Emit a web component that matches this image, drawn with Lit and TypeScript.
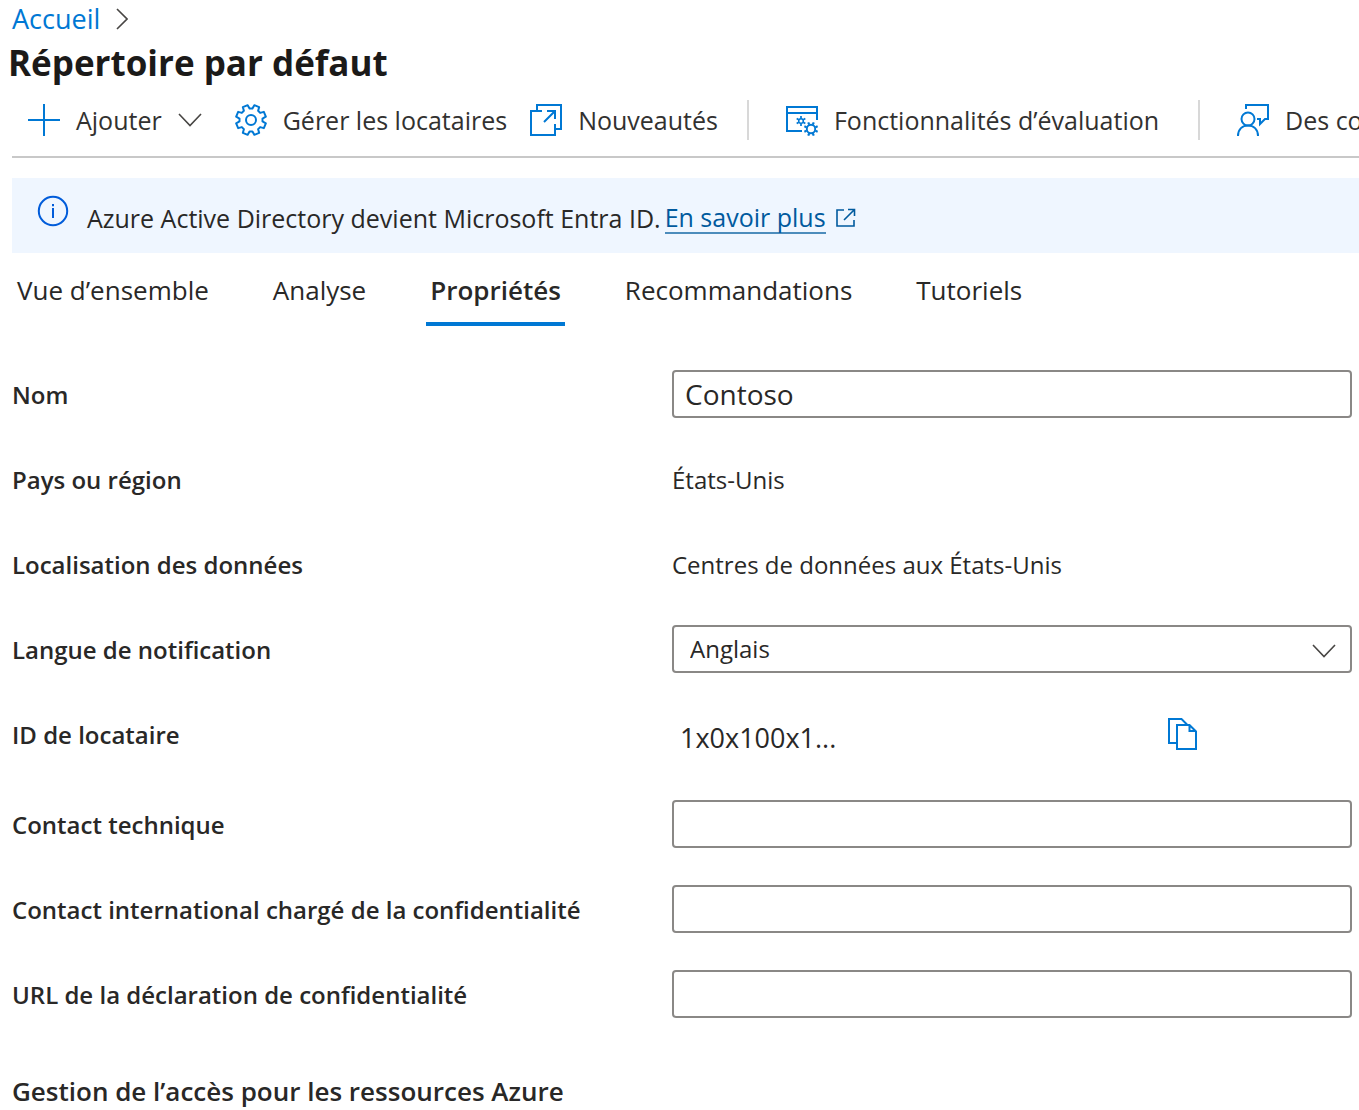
import { LitElement, html, css, svg } from "lit";
import { customElement, state } from "lit/decorators.js";

const gearPath = (cx: number, cy: number, outer: number, inner: number, teeth: number): string => {
  const points: string[] = [];
  const step = (Math.PI * 2) / teeth;
  for (let i = 0; i < teeth; i++) {
    const a = i * step + step / 2 - Math.PI / 2;
    const corners: [number, number][] = [
      [a - step * 0.34, inner],
      [a - step * 0.22, outer],
      [a + step * 0.22, outer],
      [a + step * 0.34, inner],
    ];
    for (const [t, r] of corners) {
      points.push(`${(cx + r * Math.cos(t)).toFixed(2)} ${(cy + r * Math.sin(t)).toFixed(2)}`);
    }
  }
  return `M${points.join("L")}Z`;
};

const spokes = (cx: number, cy: number, from: number, to: number, count: number): string =>
  Array.from({ length: count }, (_, i) => {
    const a = ((i + 0.5) * Math.PI * 2) / count;
    const at = (r: number) => `${(cx + r * Math.cos(a)).toFixed(2)} ${(cy + r * Math.sin(a)).toFixed(2)}`;
    return `M${at(from)}L${at(to)}`;
  }).join("");

const icons = {
  plus: svg`<path d="M16 0V32M0 16H32" />`,
  gear: svg`<path d=${gearPath(16, 16, 15.2, 11.6, 8)} stroke-linejoin="round" /><circle cx="16" cy="16" r="5" />`,
  news: svg`<path d="M7 6V1H31V25H26M12 7H1V31H25V20M14 18L25 7M17 7H25V15" />`,
  preview: svg`<path d="M16 27H1V3H31V16M1 9H31" />
    <circle cx="15" cy="17" r="2.3" stroke-width="1.5" /><path d=${spokes(15, 17, 2.6, 5, 6)} stroke-width="1.7" />
    <circle cx="25" cy="25" r="4.2" stroke-width="1.9" /><path d=${spokes(25, 25, 4.8, 7.2, 8)} stroke-width="2.2" />`,
  feedback: svg`<circle cx="11" cy="15" r="6.5" /><path d="M1 32C1 25 5.5 21.5 11 21.5S21 25 21 32M9 5V1H31V15H28L23 20V15H20" />`,
};

@customElement("app-root")
export class AppRoot extends LitElement {
  static styles = css`
    :host {
      display: block;
      overflow: hidden;
      background: #fff;
      color: #292827;
      font-family: "Open Sans", "Noto Sans", sans-serif;
      font-size: 24px;
      line-height: 32px;
    }
    * {
      box-sizing: border-box;
    }
    svg {
      display: block;
      flex: none;
      fill: none;
      stroke: #0078d4;
      stroke-width: 2;
    }
    button,
    input,
    select {
      font: inherit;
      color: inherit;
      margin: 0;
    }
    button {
      padding: 0;
      border: 0;
      background: none;
      cursor: pointer;
      white-space: nowrap;
    }
    .page {
      padding-left: 12px;
    }
    .crumbs {
      display: flex;
      align-items: center;
      gap: 16px;
      height: 38px;
    }
    .crumbs a {
      color: #0078d4;
      text-decoration: none;
      font-size: 27px;
    }
    .thin {
      stroke: #484644;
      stroke-width: 1.6;
    }
    .title {
      margin: 0 0 0 -4px;
      color: #1b1a19;
      font-size: 35px;
      font-weight: 700;
      line-height: 50px;
    }
    .toolbar {
      display: flex;
      align-items: center;
      height: 70px;
      padding: 0 0 4px 16px;
      border-bottom: 2px solid #c8c8c8;
      overflow: hidden;
      font-size: 25px;
    }
    .tool {
      display: flex;
      flex: none;
      align-items: center;
      gap: 16px;
      margin-right: 23px;
      color: #323130;
    }
    .tool.roomy {
      margin-right: 33px;
    }
    .rule {
      flex: none;
      width: 2px;
      height: 40px;
      margin: 0 37px 0 6px;
      background: #d8d8d8;
    }
    .notice {
      display: flex;
      align-items: center;
      gap: 18px;
      min-height: 75px;
      margin-top: 20px;
      padding: 8px 25px;
      background: #eff6ff;
      font-size: 25px;
    }
    .notice svg {
      margin-bottom: 10px;
    }
    .info {
      stroke: #015cda;
    }
    .notice p {
      display: flex;
      align-items: center;
      gap: 4px;
      margin: 0;
      padding-top: 4px;
    }
    .notice a {
      display: flex;
      align-items: center;
      gap: 10px;
      color: #005a9e;
      text-decoration: none;
    }
    .notice a span {
      border-bottom: 2px solid #4c8cbc;
      line-height: 30px;
    }
    .notice a svg {
      margin: 0;
      stroke: #005a9e;
      stroke-width: 1.6;
    }
    .tabs {
      display: flex;
      gap: 56px;
      padding-left: 1px;
    }
    .tab {
      height: 73px;
      padding: 4px 4px 0;
      border-bottom: 4px solid transparent;
      font-size: 26px;
    }
    .tab.active {
      border-color: #0078d4;
      font-weight: 600;
    }
    .form {
      display: grid;
      gap: 37px;
      padding: 44px 7px 0 0;
    }
    .row {
      display: grid;
      grid-template-columns: 33fr 34fr;
      line-height: 50px;
      min-height: 48px;
    }
    .row.tall {
      min-height: 53px;
    }
    .label {
      height: 48px;
      font-weight: 600;
    }
    .value {
      height: 48px;
    }
    .field {
      display: block;
      width: 100%;
      height: 48px;
      padding: 0 11px;
      border: 2px solid #8a8886;
      border-radius: 4px;
      background: #fff;
      font-size: 28px;
      line-height: 40px;
    }
    .pick {
      position: relative;
    }
    .pick select {
      appearance: none;
      padding: 0 48px 0 16px;
      font-size: 24px;
    }
    .pick svg {
      position: absolute;
      top: 19px;
      right: 16px;
      pointer-events: none;
    }
    .tenant {
      display: grid;
      grid-template-columns: 73fr 27fr;
      align-items: start;
    }
    .tenant output {
      padding: 3px 0 0 8px;
      font-size: 27px;
    }
    .copy {
      justify-self: start;
      padding-top: 8px;
    }
    .section {
      margin: 48px 0 0;
      font-size: 26px;
      font-weight: 600;
      line-height: 50px;
    }
  `;

  @state() private active = "Propriétés";

  private tabs = ["Vue d’ensemble", "Analyse", "Propriétés", "Recommandations", "Tutoriels"];

  private icon(shape: unknown) {
    return html`<svg width="32" height="32" viewBox="0 0 32 32" aria-hidden="true">${shape}</svg>`;
  }

  private chevron() {
    return html`<svg class="thin" width="24" height="14" viewBox="0 0 24 14" aria-hidden="true"><path d="M1 1L12 12.5L23 1" /></svg>`;
  }

  private textRow(id: string, label: string, value = "") {
    return html`<div class="row">
      <label class="label" for=${id}>${label}</label>
      <input class="field" id=${id} type="text" .value=${value} />
    </div>`;
  }

  render() {
    return html`<main class="page">
      <nav class="crumbs" aria-label="Fil d’Ariane">
        <a href="#">Accueil</a>
        <svg class="thin" width="12" height="22" viewBox="0 0 12 22" aria-hidden="true"><path d="M1 1L11 11L1 21" /></svg>
      </nav>
      <h1 class="title">Répertoire par défaut</h1>
      <div class="toolbar" role="toolbar">
        <button class="tool roomy">${this.icon(icons.plus)}<span>Ajouter</span>${this.chevron()}</button>
        <button class="tool">${this.icon(icons.gear)}<span>Gérer les locataires</span></button>
        <button class="tool">${this.icon(icons.news)}<span>Nouveautés</span></button>
        <span class="rule"></span>
        <button class="tool roomy">${this.icon(icons.preview)}<span>Fonctionnalités d’évaluation</span></button>
        <span class="rule"></span>
        <button class="tool">${this.icon(icons.feedback)}<span>Des commentaires ?</span></button>
      </div>
      <div class="notice">
        <svg class="info" width="32" height="32" viewBox="0 0 32 32" aria-hidden="true">
          <circle cx="16" cy="16" r="14.2" /><path d="M16 13V23M16 9V11.2" />
        </svg>
        <p>
          <span>Azure Active Directory devient Microsoft Entra ID.</span>
          <a href="#"><span>En savoir plus</span>
            <svg width="20" height="20" viewBox="0 0 20 20" aria-hidden="true"><path d="M8 2H1V18H18V12M8 12L18 2M12 1.5H18.5V8" /></svg></a>
        </p>
      </div>
      <div class="tabs" role="tablist">
        ${this.tabs.map(
          (t) => html`<button class="tab ${t === this.active ? "active" : ""}" role="tab"
            aria-selected=${t === this.active} @click=${() => (this.active = t)}>${t}</button>`
        )}
      </div>
      <form class="form">
        ${this.textRow("name", "Nom", "Contoso")}
        <div class="row"><span class="label">Pays ou région</span><span class="value">États-Unis</span></div>
        <div class="row"><span class="label">Localisation des données</span><span class="value">Centres de données aux États-Unis</span></div>
        <div class="row">
          <label class="label" for="lang">Langue de notification</label>
          <div class="pick">
            <select class="field" id="lang"><option>Anglais</option></select>
            ${this.chevron()}
          </div>
        </div>
        <div class="row tall">
          <label class="label" for="tenant">ID de locataire</label>
          <div class="tenant">
            <output id="tenant">1x0x100x1...</output>
            <button class="copy" type="button" aria-label="Copier">
              <svg width="30" height="32" viewBox="0 0 30 32" aria-hidden="true"><path d="M9 25H1V1H13.5L19 6.5M9 7H21.5L28 13.5V31H9ZM21.5 7V13H28" /></svg>
            </button>
          </div>
        </div>
        ${this.textRow("tech", "Contact technique")}
        ${this.textRow("privacy", "Contact international chargé de la confidentialité")}
        ${this.textRow("url", "URL de la déclaration de confidentialité")}
      </form>
      <h2 class="section">Gestion de l’accès pour les ressources Azure</h2>
    </main>`;
  }
}
